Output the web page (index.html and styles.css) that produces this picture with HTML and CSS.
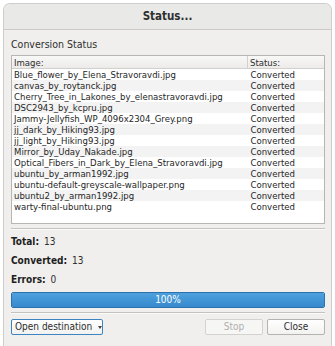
FILE: index.html
```html
<!DOCTYPE html>
<html lang="en">
<head>
  <meta charset="UTF-8">
  <title>Status...</title>
  <link rel="stylesheet" href="styles.css">
</head>
<body>
  <div class="window">
    <div class="titlebar">Status...</div>
    <div class="content">
      <div class="group-title">Conversion Status</div>
      <div class="list-box">
        <table class="files">
          <thead>
            <tr><th class="col-image">Image:</th><th>Status:</th></tr>
          </thead>
          <tbody>
            <tr><td>Blue_flower_by_Elena_Stravoravdi.jpg</td><td>Converted</td></tr>
            <tr><td>canvas_by_roytanck.jpg</td><td>Converted</td></tr>
            <tr><td>Cherry_Tree_in_Lakones_by_elenastravoravdi.jpg</td><td>Converted</td></tr>
            <tr><td>DSC2943_by_kcpru.jpg</td><td>Converted</td></tr>
            <tr><td>Jammy-Jellyfish_WP_4096x2304_Grey.png</td><td>Converted</td></tr>
            <tr><td>jj_dark_by_Hiking93.jpg</td><td>Converted</td></tr>
            <tr><td>jj_light_by_Hiking93.jpg</td><td>Converted</td></tr>
            <tr><td>Mirror_by_Uday_Nakade.jpg</td><td>Converted</td></tr>
            <tr><td>Optical_Fibers_in_Dark_by_Elena_Stravoravdi.jpg</td><td>Converted</td></tr>
            <tr><td>ubuntu_by_arman1992.jpg</td><td>Converted</td></tr>
            <tr><td>ubuntu-default-greyscale-wallpaper.png</td><td>Converted</td></tr>
            <tr><td>ubuntu2_by_arman1992.jpg</td><td>Converted</td></tr>
            <tr><td>warty-final-ubuntu.png</td><td>Converted</td></tr>
          </tbody>
        </table>
      </div>

      <div class="separator"></div>

      <div class="stat"><b>Total:</b> 13</div>
      <div class="stat"><b>Converted:</b> 13</div>
      <div class="stat"><b>Errors:</b> 0</div>

      <div class="progress">
        <div class="progress-fill" style="width: 100%">100%</div>
      </div>

      <div class="separator"></div>

      <div class="buttons">
        <button class="btn dropdown">Open destination <span class="arrow"></span></button>
        <div class="spacer"></div>
        <button class="btn" disabled>Stop</button>
        <button class="btn">Close</button>
      </div>
    </div>
  </div>
</body>
</html>
```

FILE: styles.css
```css
body {
  margin: 0;
  background: #ffffff;
  font-family: 'DejaVu Sans Condensed', 'DejaVu Sans', sans-serif;
  font-size: 10px;
  color: #2e2e2e;
}

.window {
  box-sizing: border-box;
  width: 329px;
  height: 343px;
  margin: 3px 0 0 3px;
  background: #f0efed;
  border: 1px solid #cfcdca;
  border-bottom: none;
  border-radius: 7px 7px 0 0;
  overflow: hidden;
}

.titlebar {
  height: 25px;
  line-height: 25px;
  background: #e9e9e8;
  border-bottom: 1px solid #cbcac8;
  text-align: center;
  font-weight: bold;
  font-size: 11.5px;
  color: #2f2f2f;
}

.content {
  padding: 7px 6px 0 7px;
}

.group-title {
  line-height: 14px;
  font-size: 10.5px;
  margin-bottom: 4px;
}

.list-box {
  height: 167px;
  background: #fff;
  border: 1px solid #b8b6b3;
}

.files {
  width: 100%;
  border-collapse: collapse;
  font-size: 9.5px;
}

.files th {
  height: 12px;
  padding: 0 2px;
  text-align: left;
  font-weight: normal;
  background: linear-gradient(#f8f8f7, #ecebea);
  border-bottom: 1px solid #d2d0cd;
  line-height: 11px;
}

.files th.col-image {
  width: 231px;
  border-right: 1px solid #d2d0cd;
}

.files td {
  height: 11px;
  padding: 0 2px;
  line-height: 11px;
  white-space: nowrap;
  color: #262626;
}

.files td:last-child {
  padding-left: 3px;
}

.files tbody tr:nth-child(even) {
  background: #f3f3f3;
}

.separator {
  height: 1px;
  margin: 4px 0 5px;
  background: #c4c2bf;
  border-bottom: 1px solid #fbfbfa;
}

.stat {
  line-height: 14px;
  margin-bottom: 5px;
  font-size: 10px;
}

.stat b {
  color: #1e1e1e;
  margin-right: 2px;
}

.progress {
  box-sizing: border-box;
  height: 16px;
  border: 1px solid #2e72ad;
  border-radius: 2px;
  background: #e6e6e6;
  overflow: hidden;
}

.progress-fill {
  height: 100%;
  background: linear-gradient(#4ea0dd, #3689cc);
  color: #fff;
  text-align: center;
  line-height: 14px;
  font-size: 10px;
}

.buttons {
  display: flex;
  gap: 4px;
}

.spacer {
  flex: 1;
}

.btn {
  box-sizing: border-box;
  height: 16px;
  padding: 0 5px;
  font-family: inherit;
  font-size: 10px;
  color: #2e2e2e;
  background: linear-gradient(#ffffff, #f2f2f1);
  border: 1px solid #b5b3b0;
  border-radius: 2px;
  width: 58px;
  line-height: 14px;
  white-space: nowrap;
}

.btn:disabled {
  color: #b2b0ad;
  border-color: #d4d2cf;
  background: #f6f6f5;
}

.btn.dropdown {
  width: 92px;
  text-align: left;
  padding-left: 3px;
  border-color: #3d84c2;
}

.arrow {
  display: inline-block;
  margin-left: 3px;
  vertical-align: middle;
  border-left: 2.5px solid transparent;
  border-right: 2.5px solid transparent;
  border-top: 3px solid #444;
}
```
